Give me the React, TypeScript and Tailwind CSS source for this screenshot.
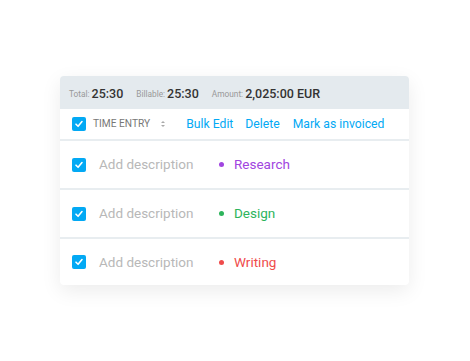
import React from "react";

function Check() {
  return (
    <div className="flex h-[14px] w-[14px] shrink-0 items-center justify-center rounded-[2px] bg-[#03a9f4]">
      <svg width="10" height="10" viewBox="0 0 10 10" fill="none">
        <path d="M2 5.2 L4.1 7.3 L8 2.6" stroke="white" strokeWidth="1.6" strokeLinecap="round" strokeLinejoin="round" />
      </svg>
    </div>
  );
}

function Row({ label, color, last }: { label: string; color: string; last?: boolean }) {
  return (
    <div className={"flex items-center border-t-2 border-[#e8edf0] pl-[12px] " + (last ? "h-[48px]" : "h-[49px]")}>
      <Check />
      <div className="ml-[13px] w-[120px] text-[13.5px] text-[#b8b8b8]">Add description</div>
      <div className="h-[5px] w-[5px] rounded-full" style={{ backgroundColor: color }} />
      <div className="ml-[10px] text-[13.5px]" style={{ color }}>{label}</div>
    </div>
  );
}

export default function App() {
  return (
    <div className="h-[361px] w-[470px] bg-white pl-[60px] pt-[76px]" style={{ fontFamily: "Roboto, 'Liberation Sans', sans-serif" }}>
      <div className="w-[349px] overflow-hidden rounded-[4px] bg-white shadow-[0_6px_20px_rgba(0,0,0,0.08)]">
        <div className="flex h-[33px] items-center bg-[#e4eaee] pl-[9px] pt-[3px]">
          <span className="text-[8.3px] text-[#999]">Total:</span>
          <span className="ml-[2px] text-[12.5px] font-medium text-[#333]">25:30</span>
          <span className="ml-[13px] text-[8.3px] text-[#999]">Billable:</span>
          <span className="ml-[2px] text-[12.5px] font-medium text-[#333]">25:30</span>
          <span className="ml-[13px] text-[8.3px] text-[#999]">Amount:</span>
          <span className="ml-[2px] text-[12.5px] font-medium text-[#333]">2,025:00 EUR</span>
        </div>
        <div className="flex h-[30px] items-center pl-[12px]">
          <Check />
          <span className="ml-[7px] text-[10.2px] text-[#777]">TIME ENTRY</span>
          <svg className="ml-[10px]" width="6" height="8" viewBox="0 0 6 8">
            <path d="M1 3 L3 1 L5 3 Z" fill="#aaa" />
            <path d="M1 5 L3 7 L5 5 Z" fill="#aaa" />
          </svg>
          <span className="ml-[20px] text-[12.2px] text-[#03a9f4]">Bulk Edit</span>
          <span className="ml-[12px] text-[12.2px] text-[#03a9f4]">Delete</span>
          <span className="ml-[13px] text-[12.2px] text-[#03a9f4]">Mark as invoiced</span>
        </div>
        <Row label="Research" color="#a145e0" />
        <Row label="Design" color="#2db45c" />
        <Row label="Writing" color="#ef4b4b" last />
      </div>
    </div>
  );
}
